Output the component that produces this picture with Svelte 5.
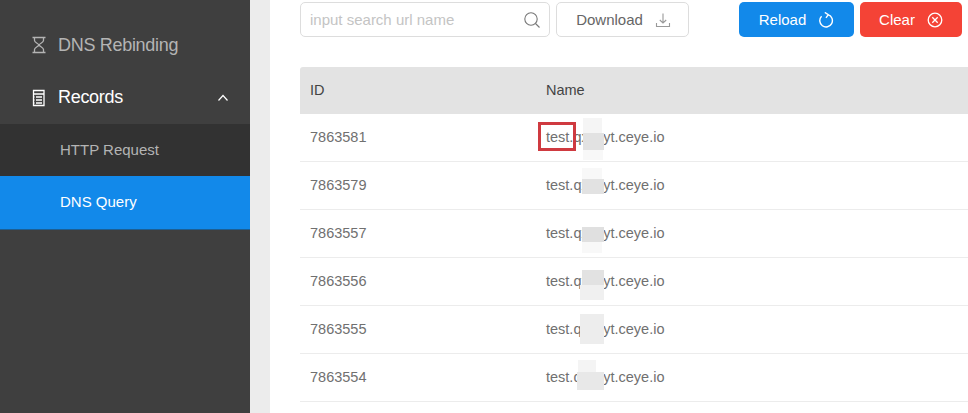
<script lang="ts">
	type Smudge = { x: number; y: number; w: number; h: number; c: string };
	type Row = { id: string; name: string; smudges: Smudge[] };

	const rows: Row[] = [
		{ id: '7863581', name: 'test.qxxxyt.ceye.io', smudges: [
			{ x: 37, y: 4, w: 19, h: 15, c: '#f5f5f5' }, { x: 37, y: 19, w: 21, h: 17, c: '#e2e2e2' }, { x: 37, y: 36, w: 20, h: 10, c: '#f8f8f8' } ] },
		{ id: '7863579', name: 'test.qxxxyt.ceye.io', smudges: [
			{ x: 36, y: 6, w: 20, h: 11, c: '#f8f8f8' }, { x: 36, y: 17, w: 22, h: 15, c: '#e2e2e2' } ] },
		{ id: '7863557', name: 'test.qxxxyt.ceye.io', smudges: [
			{ x: 36, y: 17, w: 22, h: 15, c: '#e0e0e0' }, { x: 36, y: 32, w: 20, h: 11, c: '#f8f8f8' } ] },
		{ id: '7863556', name: 'test.qxxxyt.ceye.io', smudges: [
			{ x: 36, y: 12, w: 22, h: 15, c: '#e2e2e2' }, { x: 34, y: 27, w: 24, h: 15, c: '#f0f0f0' } ] },
		{ id: '7863555', name: 'test.qxxxyt.ceye.io', smudges: [
			{ x: 34, y: 8, w: 24, h: 30, c: '#ededed' } ] },
		{ id: '7863554', name: 'test.qxxxyt.ceye.io', smudges: [
			{ x: 32, y: 6, w: 18, h: 12, c: '#f4f4f4' }, { x: 31, y: 18, w: 27, h: 18, c: '#e8e8e8' } ] }
	];
</script>

<div class="page">
	<aside class="sidebar">
		<div class="menu-item">
			<svg class="menu-icon" viewBox="0 0 16 18" width="16" height="18" fill="none" stroke="currentColor" stroke-width="1.3">
				<path d="M1.5 1.5h13M1.5 16.5h13M3.5 1.5v3c0 2 4 3 4.500 4.500c-.5 1.500-4.500 2.500-4.500 4.500v3M12.500 1.500v3c0 2-4 3-4.500 4.500c.5 1.500 4.500 2.500 4.500 4.500v3" />
			</svg>
			<span>DNS Rebinding</span>
		</div>
		<div class="menu-item open">
			<svg class="menu-icon" viewBox="0 0 16 18" width="16" height="18" fill="none" stroke="currentColor" stroke-width="1.3">
				<path d="M2.500 1.500h10.500v15h-10.500zM2.500 5h10.500M5 8h6M5 11h6M5 14h6M2.500 8h1M2.500 11h1M2.500 14h1" />
			</svg>
			<span>Records</span>
			<svg class="chevron" viewBox="0 0 12 12" width="12" height="12" fill="none" stroke="currentColor" stroke-width="1.200">
				<path d="M1.500 8.500 6 3.500l4.500 5" />
			</svg>
		</div>
		<div class="submenu">
			<div class="sub-item">HTTP Request</div>
			<div class="sub-item active">DNS Query</div>
		</div>
	</aside>

	<div class="gutter"></div>

	<main class="content">
		<div class="toolbar">
			<div class="search">
				<span class="placeholder">input search url name</span>
				<svg viewBox="0 0 18 18" width="18" height="18" fill="none" stroke="#777" stroke-width="1.100">
					<circle cx="8" cy="8" r="6.200" />
					<path d="m12.500 12.500 4 4" />
				</svg>
			</div>
			<button class="btn plain">
				Download
				<svg viewBox="0 0 16 16" width="16" height="16" fill="none" stroke="#999" stroke-width="1.100">
					<path d="M8 1.500v9.500M4.800 8 8 11l3.200-3M1.500 11v3.500h13V11" />
				</svg>
			</button>
			<div class="spacer"></div>
			<button class="btn primary">
				Reload
				<svg viewBox="0 0 16 16" width="16" height="16" fill="none" stroke="#fff" stroke-width="1.400">
					<path d="M3.600 4.200A6.300 6.300 0 1 0 10.200 2.700M6.800.4l3.500 2.300L8 5.900" />
				</svg>
			</button>
			<button class="btn danger">
				Clear
				<svg viewBox="0 0 16 16" width="16" height="16" fill="none" stroke="#fff" stroke-width="1.300">
					<circle cx="8" cy="8" r="6.800" />
					<path d="m5.300 5.300 5.400 5.400M10.700 5.300l-5.400 5.400" />
				</svg>
			</button>
		</div>

		<div class="table">
			<div class="row head">
				<div class="col-id">ID</div>
				<div>Name</div>
			</div>
			{#each rows as row, index}
				<div class="row">
					<div class="col-id">{row.id}</div>
					<div class="name">
						{row.name}
						{#each row.smudges as s}
							<span class="smudge" style="left:{s.x}px;top:{s.y}px;width:{s.w}px;height:{s.h}px;background:{s.c}"></span>
						{/each}
						{#if index === 0}
							<span class="marker"></span>
						{/if}
					</div>
				</div>
			{/each}
		</div>
	</main>
</div>

<style>
	:global(body) {
		margin: 0;
		overflow: hidden;
		background: #fff;
		font-family: "Liberation Sans", Arial, sans-serif;
	}

	.page {
		display: flex;
		height: 413px;
		overflow: hidden;
	}

	.sidebar {
		width: 250px;
		flex: none;
		padding-top: 19px;
		background: #3f3f3f;
		box-sizing: border-box;
	}

	.menu-item {
		display: flex;
		align-items: center;
		height: 52px;
		padding-left: 31px;
		font-size: 18px;
		letter-spacing: -0.3px;
		color: #b4b4b4;
	}

	.menu-item.open {
		color: #fff;
		height: 53px;
	}

	.menu-icon {
		margin-right: 11px;
	}

	.chevron {
		margin-left: auto;
		margin-right: 21px;
	}

	.submenu {
		background: #323232;
	}

	.sub-item {
		display: flex;
		align-items: center;
		height: 52px;
		padding: 0 0 2px 60px;
		font-size: 15px;
		color: #b4b4b4;
		box-sizing: border-box;
	}

	.sub-item.active {
		height: 54px;
		background: #1289ea;
		border-bottom: 1px solid #1c5f94;
		color: #fff;
	}

	.gutter {
		width: 20px;
		flex: none;
		background: #ececec;
	}

	.content {
		flex: 1;
		min-width: 0;
		padding: 2px 6px 0 30px;
	}

	.toolbar {
		display: flex;
		gap: 6px;
		height: 35px;
		margin-bottom: 30px;
	}

	.search {
		display: flex;
		align-items: center;
		justify-content: space-between;
		width: 250px;
		padding: 0 8px 0 9px;
		border: 1px solid #ddd;
		border-radius: 5px;
		box-sizing: border-box;
	}

	.placeholder {
		font-size: 15px;
		color: #c4c4c4;
	}

	.btn {
		display: flex;
		align-items: center;
		justify-content: center;
		gap: 12px;
		height: 35px;
		padding: 0;
		border: 1px solid transparent;
		border-radius: 5px;
		font: inherit;
		font-size: 15px;
		box-sizing: border-box;
	}

	.btn.plain {
		width: 133px;
		padding-left: 2px;
		background: #fff;
		border-color: #ddd;
		color: #666;
	}

	.btn.primary {
		width: 115px;
		background: #1289ea;
		color: #fff;
	}

	.btn.danger {
		width: 102px;
		background: #f44336;
		color: #fff;
	}

	.spacer {
		flex: 1;
	}

	.table {
		margin-right: -6px;
	}

	.row {
		display: flex;
		align-items: center;
		height: 48px;
		padding-bottom: 2px;
		border-bottom: 1px solid #ececec;
		box-sizing: border-box;
		font-size: 14.500px;
		color: #707070;
	}

	.row.head {
		height: 47px;
		border-bottom: 0;
		background: #e3e3e3;
		border-radius: 3px 0 0 0;
		color: #444;
	}

	.col-id {
		width: 246px;
		flex: none;
		padding-left: 10px;
		box-sizing: border-box;
	}

	.name {
		position: relative;
		align-self: stretch;
		display: flex;
		align-items: center;
		flex: 1;
	}

	.smudge {
		position: absolute;
	}

	.marker {
		position: absolute;
		left: -8px;
		top: 8px;
		width: 38px;
		height: 29px;
		border: 3px solid #cf3a40;
		box-sizing: border-box;
	}
</style>
